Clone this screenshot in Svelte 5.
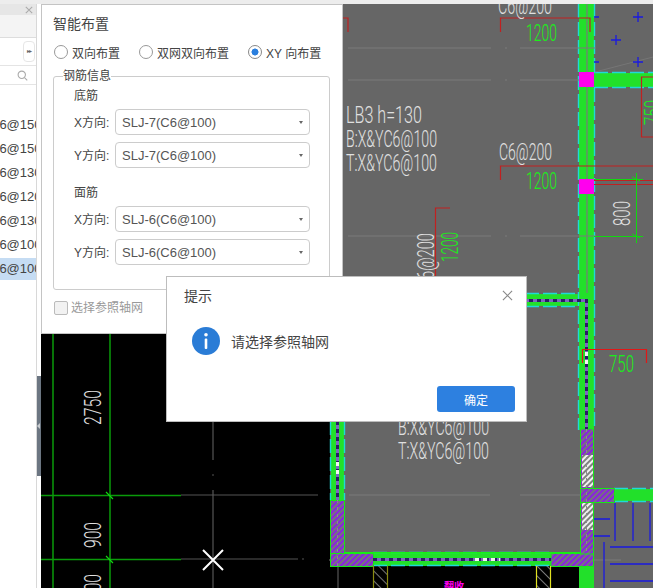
<script lang="ts">
  const items = ['C6@150', 'C6@150', 'C6@130', 'C6@120', 'C6@130', 'C6@100', 'C6@100'];

  const groups = [
    {
      name: '底筋',
      rows: [
        { label: 'X方向:', value: 'SLJ-7(C6@100)' },
        { label: 'Y方向:', value: 'SLJ-7(C6@100)' }
      ]
    },
    {
      name: '面筋',
      rows: [
        { label: 'X方向:', value: 'SLJ-6(C6@100)' },
        { label: 'Y方向:', value: 'SLJ-6(C6@100)' }
      ]
    }
  ];
  const modes = [
    { label: '双向布置', checked: false },
    { label: '双网双向布置', checked: false },
    { label: 'XY 向布置', checked: true }
  ];

  // cad labels, x/y are the baseline start in page coordinates
  const notes = [
    { t: 'C6@200', x: 498, y: 14, w: 54 },
    { t: 'LB3 h=130', x: 346, y: 123, w: 76 },
    { t: 'B:X&YC6@100', x: 346, y: 147, w: 91 },
    { t: 'T:X&YC6@100', x: 346, y: 171, w: 91 },
    { t: 'C6@200', x: 499, y: 160, w: 53 },
    { t: 'B:X&YC6@100', x: 398, y: 435, w: 91 },
    { t: 'T:X&YC6@100', x: 398, y: 459, w: 91 }
  ];
  const greenNotes = [
    { t: '1200', x: 526, y: 41, w: 31 },
    { t: '1200', x: 526, y: 189, w: 31 },
    { t: '750', x: 609, y: 372, w: 25 }
  ];
  const turned = [
    { t: '800', x: 630, y: 226, w: 25, fill: '#e0e0e0' },
    { t: '6@200', x: 434, y: 279, w: 46, fill: '#e0e0e0' },
    { t: '1200', x: 458, y: 262, w: 30, fill: '#19f019' },
    { t: '750', x: 661, y: 125, w: 25, fill: '#19f019' },
    { t: '2750', x: 101, y: 425, w: 35, fill: '#e0e0e0' },
    { t: '900', x: 101, y: 548, w: 26, fill: '#e0e0e0' },
    { t: '900', x: 101, y: 600, w: 26, fill: '#e0e0e0' }
  ];
  const crosses = [[638, 17], [616, 40], [638, 62]];
</script>

<div class="page">
  <div class="topline"></div>
  <div class="body">
    <aside class="side">
      <div class="side-head">
        <svg class="close-sm" viewBox="0 0 10 10"><path d="M1 1l8 8M9 1l-8 8" /></svg>
      </div>
      <div class="side-tabs"></div>
      <div class="side-tools">
        <span class="expand">▸▸</span>
      </div>
      <div class="side-search">
        <svg class="lens" viewBox="0 0 12 12"><circle cx="5.2" cy="5.2" r="4" /><path d="M8.2 8.2l3 3" /></svg>
      </div>
      <ul class="side-list">
        {#each items as item, i}
          <li class:active={i === items.length - 1}>{item}</li>
        {/each}
      </ul>
    </aside>
    <div class="splitter"><span class="grip"></span></div>

    <main class="canvas">
      <svg class="cad" viewBox="41 4 612 584" width="612" height="584">
        <defs>
          <pattern id="hatch" width="4" height="4" patternUnits="userSpaceOnUse" patternTransform="rotate(45)">
            <rect width="4" height="4" fill="#767280" />
            <rect width="2" height="4" fill="#8a22e0" />
          </pattern>
          <pattern id="hatchLight" width="4" height="4" patternUnits="userSpaceOnUse" patternTransform="rotate(45)">
            <rect width="4" height="4" fill="#808080" />
            <rect width="2" height="4" fill="#f0f0f0" />
          </pattern>
          <pattern id="stairs" width="7" height="7" patternUnits="userSpaceOnUse" patternTransform="rotate(-45)">
            <rect width="1" height="7" fill="#777" />
          </pattern>
        </defs>

        <rect x="41" y="4" width="612" height="584" fill="#000" />
        <rect x="330" y="4" width="323" height="562" fill="#666" />
        <rect x="594" y="503" width="59" height="85" fill="#666" />

        <g stroke="#555" stroke-width="1.2" fill="none">
          <path d="M213 421V460M213 490V588M181 495H318M181 559H298M302 559h2M338 566V588" />
          <path d="M212 475h2" />
        </g>

        <!-- walls -->
        <g fill="#22e02a">
          <rect x="579" y="4" width="15" height="300" />
          <rect x="594" y="73" width="59" height="14" />
          <rect x="345" y="294" width="240" height="12" />
          <rect x="331" y="421" width="13" height="80" />
          <rect x="579" y="304" width="15" height="126" />
          <rect x="373" y="553" width="178" height="13" />
          <rect x="614" y="489" width="39" height="12" />
          <rect x="579" y="566" width="15" height="22" />
        </g>
        <g stroke="#20d8d8" stroke-width="1.400" stroke-dasharray="14 4" fill="none">
          <path d="M578.500 4V430M594.500 4V72M594.500 88V430" />
          <path d="M594 72.500H653M594 87.500H653" />
          <path d="M345 293.500H579M345 306.500H579" />
          <path d="M344.500 421V500M330.500 421V500" />
          <path d="M373 552.500H551M373 565.500H551" />
          <path d="M614 488.500H653M614 501.500H653" />
        </g>

        <!-- axis lines -->
        <g stroke="#7a7a7a" stroke-width="1.2" fill="none">
          <path d="M348 48H491M520 48H596M348 80H491M520 80H580M348 236H491M520 236H596" />
          <path d="M349 495H490M520 495H615M329 560H621" />
          <path d="M595 72L653 57" stroke-width="0.8" />
          <path d="M505 48h2M505 80h2M505 236h2M587 4V72M587 87V179M587 194V293" />
        </g>

        <!-- hatched columns -->
        <g fill="url(#hatch)" stroke="#16e816" stroke-width="1">
          <rect x="330.500" y="500.500" width="14" height="66" />
          <rect x="330.500" y="553.500" width="43" height="13" />
          <rect x="551" y="553.500" width="42.500" height="13" />
          <rect x="580.500" y="429" width="13" height="125" />
          <rect x="580.500" y="488.500" width="34" height="14" />
        </g>
        <rect x="582" y="455" width="11" height="32" fill="url(#hatchLight)" />
        <rect x="582" y="503" width="11" height="27" fill="url(#hatchLight)" />
        <rect x="344" y="552" width="236" height="1.5" fill="#16f016" />
        <path d="M337.500 500V566M586.500 429V553" stroke="#8a8a8a" stroke-width="1" stroke-dasharray="3 4" />

        <!-- inner beam strips -->
        <g fill="none" stroke-width="3">
          <path d="M345 300.500H586.500V429M337.500 421V500M373 559.500H551" stroke="#7d66c0" />
          <path d="M345 300.500H586.500V429M337.500 421V500M373 559.500H551" stroke="#2a1a66" stroke-dasharray="4 4" />
          <path d="M586.500 352V368M337.500 462V474M475 559.500H500" stroke="#f4f4f4" stroke-dasharray="4 4" />
        </g>

        <rect x="579" y="72" width="15" height="15" fill="#ff00ee" />
        <rect x="579" y="179" width="15" height="15" fill="#ff00ee" />

        <!-- reinforcement brackets -->
        <g stroke="#c02020" stroke-width="1.2" fill="none">
          <path d="M343 18H348V32M500.500 32V18H590V32" />
          <path d="M500.500 180V166H653M594 180.500H653M594 184.500H653" />
          <path d="M450 208H435.500V276" />
          <path d="M653 77H641.500V137H653" />
        </g>
        <path d="M582.500 363V349.500H646.500V363" stroke="#e01818" stroke-width="1.2" fill="none" />

        <!-- dimensions -->
        <g stroke="#10d810" stroke-width="1" fill="none">
          <path d="M636.500 173V243M594 179.500H643M594 236.500H643M632 177l8 4M632 234l8 4" />
        </g>
        <g stroke="#0a9a0a" stroke-width="1.500" fill="none">
          <path d="M53 333V588M110 333V588M41 495.500H181M41 559.500H181" />
        </g>
        <path d="M106 492l7 7M106 556l7 7" stroke="#10d810" stroke-width="1.2" />
        <path d="M203 550l20 20M223 550l-20 20" stroke="#fff" stroke-width="2" />

        <!-- blue rebar -->
        <g stroke="#1a1ae0" stroke-width="1.300" fill="none">
          {#each crosses as [cx, cy]}
            <path d="M{cx - 5} {cy}h10M{cx} {cy - 5}v10" />
          {/each}
          <path d="M594 17h5M594 62h5" />
          <path d="M615 503V541M633 503V541M650 503V541M594 519H610M594 536H610M604 542V588M610 547H653M610 564H653M610 581H653" />
        </g>

        <!-- stair openings -->
        <rect x="373" y="566" width="15" height="22" fill="url(#stairs)" />
        <rect x="536" y="566" width="15" height="22" fill="url(#stairs)" />
        <path d="M373.500 566V588M387.500 566V588" stroke="#8a8a10" stroke-width="1.200" />
        <path d="M536.500 566V588M550.500 566V588" stroke="#e0e020" stroke-width="1.200" />

        {#each notes as n}
          <text class="cad-text" x={n.x} y={n.y} font-size="24" textLength={n.w} lengthAdjust="spacingAndGlyphs" fill="#e0e0e0">{n.t}</text>
        {/each}
        {#each greenNotes as n}
          <text class="cad-text" x={n.x} y={n.y} font-size="24" textLength={n.w} lengthAdjust="spacingAndGlyphs" fill="#19f019">{n.t}</text>
        {/each}
        {#each turned as n}
          <text class="cad-text" transform="translate({n.x} {n.y}) rotate(-90)" font-size="24" textLength={n.w} lengthAdjust="spacingAndGlyphs" fill={n.fill}>{n.t}</text>
        {/each}
        <text class="cad-tag" x="444" y="590" font-size="10" fill="#ff00ee">翻收</text>
      </svg>

      <section class="layout-panel">
        <h2>智能布置</h2>
        <div class="modes">
          {#each modes as mode}
            <label class="mode">
              <span class="radio" class:on={mode.checked}></span>
              {mode.label}
            </label>
          {/each}
        </div>
        <fieldset>
          <legend>钢筋信息</legend>
          {#each groups as group}
            <div class="group">
              <div class="group-name">{group.name}</div>
              {#each group.rows as row}
                <div class="row">
                  <span class="row-label">{row.label}</span>
                  <div class="select">
                    {row.value}
                    <span class="caret"></span>
                  </div>
                </div>
              {/each}
            </div>
          {/each}
        </fieldset>
        <label class="axis-check">
          <span class="box"></span>
          选择参照轴网
        </label>
      </section>
    </main>
  </div>

  <div class="modal">
    <header>
      <span>提示</span>
      <svg class="close" viewBox="0 0 12 12"><path d="M1 1l10 10M11 1L1 11" /></svg>
    </header>
    <div class="msg">
      <svg class="info" viewBox="0 0 28 28">
        <circle cx="14" cy="14" r="14" />
        <circle cx="14" cy="7.800" r="1.800" fill="#fff" />
        <rect x="12.700" y="11.500" width="2.600" height="10.500" rx="1" fill="#fff" />
      </svg>
      请选择参照轴网
    </div>
    <footer>
      <button type="button">确定</button>
    </footer>
  </div>
</div>

<style>
  :global(body) {
    margin: 0;
    background: #fff;
  }

  .page {
    position: relative;
    width: 653px;
    height: 588px;
    overflow: hidden;
    display: flex;
    flex-direction: column;
    font-family: "Liberation Sans", "Noto Sans CJK SC", sans-serif;
    font-size: 12px;
    color: #444;
  }

  .topline {
    height: 4px;
    flex: none;
    background: #ededed;
  }

  .body {
    flex: 1;
    display: flex;
    min-height: 0;
  }

  .side {
    width: 36px;
    flex: none;
    border-right: 1px solid #d8d8d8;
    background: #fff;
  }

  .side-head {
    height: 11px;
    background: #e6e6e6;
    display: flex;
    justify-content: flex-end;
    align-items: center;
    padding-right: 3px;
  }

  .close-sm {
    width: 8px;
    height: 8px;
    stroke: #aaa;
    stroke-width: 1.300;
    fill: none;
  }

  .side-tabs {
    height: 22px;
    background: #f4f4f4;
    border-bottom: 1px solid #ddd;
  }

  .side-tools {
    height: 27px;
    border-bottom: 1px solid #e4e4e4;
    display: flex;
    justify-content: flex-end;
    align-items: center;
  }

  .expand {
    width: 10px;
    height: 19px;
    border: 1px solid #e6e6e6;
    border-radius: 4px;
    font-family: "DejaVu Sans", sans-serif;
    font-size: 6px;
    line-height: 18px;
    text-align: center;
    color: #666;
    letter-spacing: -1px;
    margin-right: 1px;
  }

  .side-search {
    height: 18px;
    border-bottom: 1px solid #e4e4e4;
    display: flex;
    justify-content: flex-end;
    align-items: center;
    padding-right: 8px;
  }

  .lens {
    width: 11px;
    height: 11px;
    stroke: #aaa;
    stroke-width: 1.200;
    fill: none;
  }

  .side-list {
    list-style: none;
    margin: 29px 0 0;
    padding: 0;
  }

  .side-list li {
    height: 22px;
    line-height: 22px;
    margin-bottom: 2px;
    white-space: nowrap;
    overflow: hidden;
    text-indent: -10px;
    font-size: 13px;
    color: #444;
  }

  .side-list li.active {
    background: #c5dcf3;
  }

  .splitter {
    width: 4px;
    flex: none;
    display: flex;
    align-items: center;
    background: #fff;
  }

  .grip {
    position: relative;
    width: 4px;
    height: 100px;
    background: #6c7682;
    margin-top: 260px;
  }

  .grip::after {
    content: '';
    position: absolute;
    left: 0;
    top: 47px;
    border-top: 3px solid transparent;
    border-bottom: 3px solid transparent;
    border-right: 3px solid #c8ccd0;
  }

  .canvas {
    position: relative;
    flex: 1;
    min-width: 0;
  }

  .cad {
    display: block;
  }

  .cad-text {
    font-family: Roboto, "Liberation Sans", sans-serif;
    font-weight: 300;
  }

  .cad-tag {
    font-family: "Noto Sans CJK SC", sans-serif;
    font-weight: 700;
  }

  .layout-panel {
    position: absolute;
    left: 0;
    top: 0;
    box-sizing: border-box;
    width: 302px;
    height: 330px;
    background: #fff;
    border: 1px solid #c4c4c4;
    padding: 9px 12px 0 11px;
  }

  h2 {
    margin: 0;
    font-size: 14px;
    font-weight: 400;
    line-height: 20px;
    color: #444;
  }

  .modes {
    display: flex;
    margin-top: 8px;
    height: 20px;
    align-items: center;
    padding-left: 1px;
  }

  .mode {
    display: flex;
    align-items: center;
    gap: 4px;
    margin-right: 19px;
    white-space: nowrap;
  }

  .radio {
    box-sizing: border-box;
    width: 14px;
    height: 14px;
    border: 1px solid #999;
    border-radius: 50%;
    flex: none;
  }

  .radio.on {
    border-color: #888;
    background: radial-gradient(circle, #2a7fde 0 3.200px, #fff 3.800px);
  }

  fieldset {
    box-sizing: border-box;
    height: 222px;
    margin: 6px 0 0;
    padding: 0 0 0 20px;
    border: 1px solid #ccc;
    border-radius: 3px;
    min-width: 0;
  }

  legend {
    padding: 0;
    margin-left: -11px;
    line-height: 16px;
    background: #fff;
  }

  .group {
    margin-bottom: 15px;
  }

  .group-name {
    line-height: 20px;
    margin-top: 2px;
    margin-bottom: 3px;
  }

  .row {
    display: flex;
    align-items: center;
    margin-bottom: 7px;
  }

  .row-label {
    width: 41px;
    flex: none;
    white-space: nowrap;
    margin-top: -1px;
  }

  .select {
    box-sizing: border-box;
    position: relative;
    width: 195px;
    height: 26px;
    border: 1px solid #ccc;
    border-radius: 4px;
    padding-left: 6px;
    line-height: 25px;
    font-size: 13px;
    color: #555;
  }

  .caret {
    position: absolute;
    right: 6px;
    top: 11px;
    border-left: 2.500px solid transparent;
    border-right: 2.500px solid transparent;
    border-top: 3px solid #666;
  }

  .axis-check {
    display: flex;
    align-items: center;
    gap: 3px;
    margin-top: 10px;
    padding-left: 1px;
    line-height: 16px;
    color: #999;
  }

  .box {
    box-sizing: border-box;
    width: 14px;
    height: 14px;
    background: #f2f2f2;
    border: 1px solid #bbb;
    border-radius: 2px;
  }

  .modal {
    position: absolute;
    left: 166px;
    top: 276px;
    box-sizing: border-box;
    width: 361px;
    height: 146px;
    background: #fff;
    border: 1px solid #bdbdbd;
    display: flex;
    flex-direction: column;
  }

  .modal header {
    display: flex;
    justify-content: space-between;
    align-items: center;
    height: 36px;
    padding: 0 13px 0 17px;
    font-size: 14px;
    color: #444;
  }

  .close {
    width: 11px;
    height: 11px;
    stroke: #888;
    stroke-width: 1.200;
    fill: none;
  }

  .msg {
    display: flex;
    align-items: center;
    gap: 11px;
    margin-top: 14px;
    padding-left: 25px;
    font-size: 14px;
  }

  .info {
    width: 28px;
    height: 28px;
    fill: #2a7cd6;
    flex: none;
  }

  .modal footer {
    margin-top: auto;
    display: flex;
    justify-content: flex-end;
    padding: 0 11px 9px 0;
  }

  .modal button {
    width: 78px;
    height: 26px;
    background: #2d80e0;
    border: none;
    border-radius: 3px;
    color: #fff;
    font-family: inherit;
    font-size: 12px;
    cursor: pointer;
  }
</style>
